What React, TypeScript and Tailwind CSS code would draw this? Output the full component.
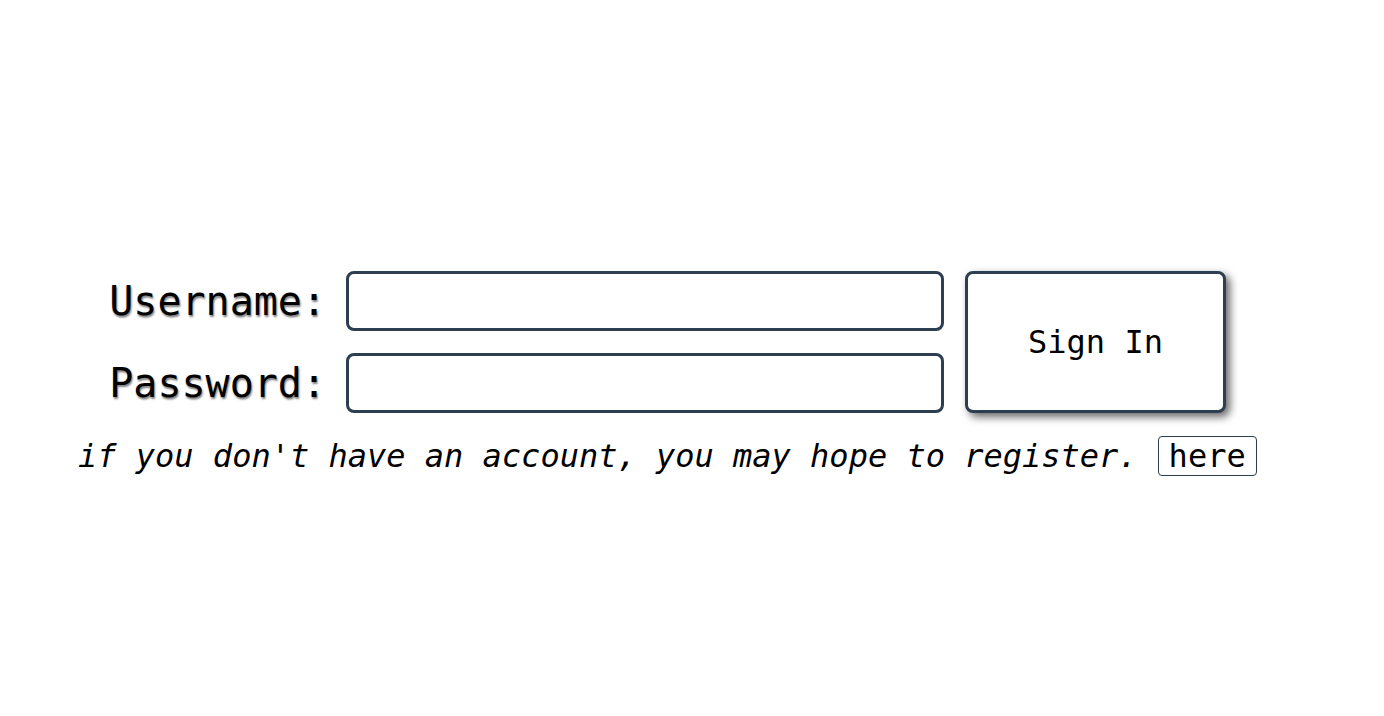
import { useState } from 'react';

export default function App() {
  const [username, setUsername] = useState('');
  const [password, setPassword] = useState('');

  return (
    <div className="min-h-screen bg-white text-black font-['DejaVu_Sans_Mono',monospace]">
      <div className="pt-[271px] pl-[78px]">
        <div className="flex items-start gap-[21px]">
          <div className="grid grid-cols-[248px_598px] gap-x-[20px] gap-y-[22px] items-center">
            <label className="text-[40px] leading-none text-right [text-shadow:1px_2px_2px_rgba(0,0,0,0.5)]">
              Username:
            </label>
            <input
              value={username}
              onChange={(e) => setUsername(e.target.value)}
              className="h-[60px] w-[598px] border-[3px] border-[#2c3e50] rounded-[8px] px-3 text-[28px] outline-none"
            />
            <label className="text-[40px] leading-none text-right [text-shadow:1px_2px_2px_rgba(0,0,0,0.5)]">
              Password:
            </label>
            <input
              type="password"
              value={password}
              onChange={(e) => setPassword(e.target.value)}
              className="h-[60px] w-[598px] border-[3px] border-[#2c3e50] rounded-[8px] px-3 text-[28px] outline-none"
            />
          </div>
          <button className="h-[142px] w-[261px] border-[3px] border-[#2c3e50] rounded-[8px] bg-white text-[32px] shadow-[4px_4px_8px_rgba(0,0,0,0.6)]">
            Sign In
          </button>
        </div>
        <div className="flex items-center gap-[20px] mt-[23px]">
          <p className="italic text-[32px] leading-none">
            if you don't have an account, you may hope to register.
          </p>
          <button className="h-[40px] px-[10px] border-[1.5px] border-[#2c3e50] rounded-[4px] text-[32px] leading-none">
            here
          </button>
        </div>
      </div>
    </div>
  );
}
